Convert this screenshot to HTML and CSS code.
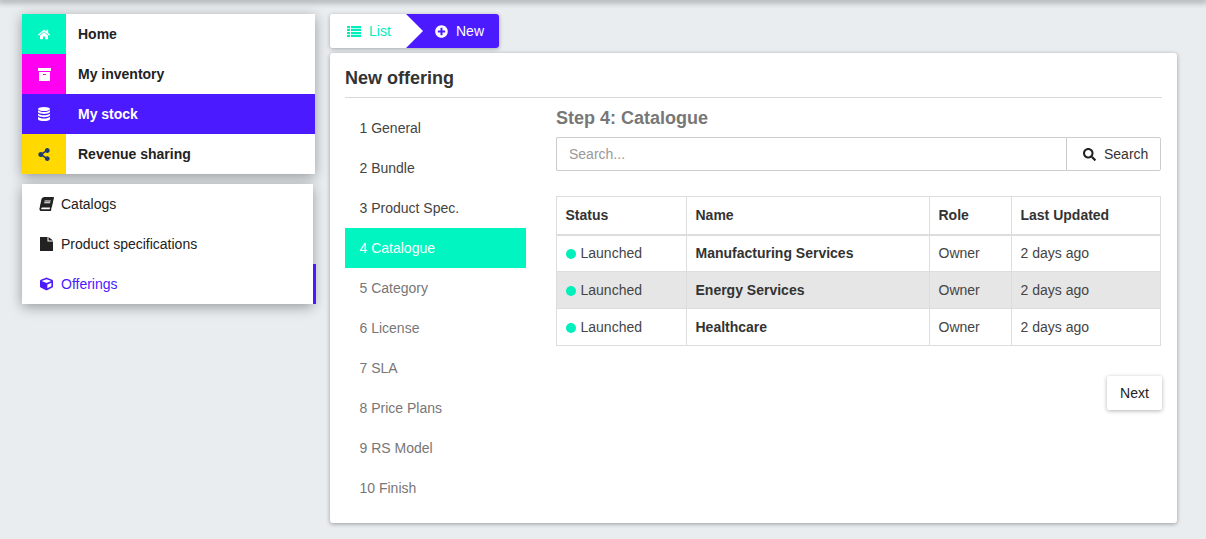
FILE: index.html
```html
<!DOCTYPE html>
<html lang="en">
<head>
  <meta charset="UTF-8" />
  <meta name="viewport" content="width=device-width, initial-scale=1.0"/>
  <title>New offering</title>
  <link rel="stylesheet" href="styles.css">
</head>
<body>
  <div class="topedge"></div>
  <div class="page">
    <aside class="sidebar">
      <nav class="mainmenu">
        <a class="mainitem">
          <span class="tile tile-home"><svg class="ico ico-home" viewBox="0 0 576 512"><path d="M280.37 148.26L96 300.11V464a16 16 0 0 0 16 16l112.06-.29a16 16 0 0 0 15.92-16V368a16 16 0 0 1 16-16h64a16 16 0 0 1 16 16v95.64a16 16 0 0 0 16 16.05L464 480a16 16 0 0 0 16-16V300L295.67 148.26a12.19 12.19 0 0 0-15.3 0zM571.6 251.47L488 182.56V44.05a12 12 0 0 0-12-12h-56a12 12 0 0 0-12 12v72.61L318.47 43a48 48 0 0 0-61 0L4.34 251.47a12 12 0 0 0-1.6 16.9l25.5 31A12 12 0 0 0 45.15 301l235.22-193.74a12.19 12.19 0 0 1 15.3 0L530.9 301a12 12 0 0 0 16.9-1.6l25.5-31a12 12 0 0 0-1.7-16.93z"/></svg></span>
          Home
        </a>
        <a class="mainitem">
          <span class="tile tile-inventory"><svg class="ico ico-box" viewBox="0 0 13 13"><path d="M0 0h13v3H0zM1 4h11v9H1zM5 6v1h3V6z" fill-rule="evenodd"/></svg></span>
          My inventory
        </a>
        <a class="mainitem mainitem-active">
          <span class="tile"><svg class="ico ico-db" viewBox="0 0 12 14"><ellipse cx="6" cy="2" rx="6" ry="2"/><path d="M0 3.2v1.6C0 6 2.7 6.9 6 6.9s6-.9 6-2.1V3.2C11 4.3 8.6 5 6 5S1 4.3 0 3.2z"/><path d="M0 6.5v1.6c0 1.2 2.7 2.1 6 2.1s6-.9 6-2.1V6.5c-1 1.1-3.4 1.8-6 1.8s-5-.7-6-1.8z"/><path d="M0 9.8v2.1C0 13.1 2.7 14 6 14s6-.9 6-2.1V9.8c-1 1.1-3.4 1.8-6 1.8s-5-.7-6-1.8z"/></svg></span>
          My stock
        </a>
        <a class="mainitem">
          <span class="tile tile-revenue"><svg class="ico ico-share" viewBox="0 0 448 512"><path d="M352 320c-22.608 0-43.387 7.819-59.79 20.895l-102.486-64.054a96.551 96.551 0 0 0 0-41.683l102.486-64.054C308.613 184.181 329.392 192 352 192c53.019 0 96-42.981 96-96S405.019 0 352 0s-96 42.981-96 96c0 7.158.79 14.13 2.276 20.841L155.79 180.895C139.387 167.819 118.608 160 96 160c-53.019 0-96 42.981-96 96s42.981 96 96 96c22.608 0 43.387-7.819 59.79-20.895l102.486 64.054A96.301 96.301 0 0 0 256 416c0 53.019 42.981 96 96 96s96-42.981 96-96-42.981-96-96-96z"/></svg></span>
          Revenue sharing
        </a>
      </nav>
      <nav class="submenu">
        <a class="subitem">
          <svg class="subico subico-book" viewBox="0 0 448 512"><path d="M448 360V24c0-13.3-10.7-24-24-24H96C43 0 0 43 0 96v320c0 53 43 96 96 96h328c13.3 0 24-10.7 24-24v-16c0-7.5-3.5-14.3-8.9-18.7-4.2-15.4-4.2-59.3 0-74.7 5.4-4.3 8.9-11.1 8.9-18.6zM128 134c0-3.3 2.7-6 6-6h212c3.3 0 6 2.7 6 6v20c0 3.3-2.7 6-6 6H134c-3.3 0-6-2.7-6-6v-20zm0 64c0-3.3 2.7-6 6-6h212c3.3 0 6 2.7 6 6v20c0 3.3-2.7 6-6 6H134c-3.3 0-6-2.7-6-6v-20zm253.4 250H96c-17.7 0-32-14.3-32-32 0-17.6 14.4-32 32-32h285.4c-1.9 17.1-1.9 46.9 0 64z"/></svg>
          Catalogs
        </a>
        <a class="subitem">
          <svg class="subico" viewBox="0 0 13 14"><path d="M0 0h7.5v4.5H13V14H0zM8.500 0L13 3.500H8.500z"/></svg>
          Product specifications
        </a>
        <a class="subitem subitem-active">
          <svg class="subico" viewBox="0 0 512 512"><path d="M239.1 6.3l-208 78c-18.7 7-31.1 25-31.1 45v225.1c0 18.2 10.3 34.8 26.5 42.9l208 104c13.5 6.8 29.4 6.8 42.9 0l208-104c16.3-8.1 26.5-24.8 26.5-42.9V129.3c0-20-12.4-37.9-31.1-44.9l-208-78C262 2.2 250 2.2 239.1 6.3zM256 68.4l192 72v1.1l-192 78-192-78v-1.1l192-72zm32 356V275.5l160-65v133.9l-160 80z"/></svg>
          Offerings
        </a>
      </nav>
    </aside>

    <main class="content">
      <div class="tabs">
        <a class="tab tab-list">
          <svg class="tabico tabico-list" viewBox="0 0 14 11"><path d="M0 0h3v2.2H0zM4 0h10v2.2H4zM0 2.9h3v2.2H0zM4 2.9h10v2.2H4zM0 5.9h3v2.2H0zM4 5.9h10v2.2H4zM0 8.8h3V11H0zM4 8.8h10V11H4z"/></svg>
          List
        </a>
        <a class="tab tab-new">
          <svg class="tabico" viewBox="0 0 512 512"><path d="M256 8C119 8 8 119 8 256s111 248 248 248 248-111 248-248S393 8 256 8zm144 276c0 6.6-5.4 12-12 12h-92v92c0 6.6-5.4 12-12 12h-56c-6.6 0-12-5.4-12-12v-92h-92c-6.6 0-12-5.4-12-12v-56c0-6.6 5.4-12 12-12h92v-92c0-6.6 5.4-12 12-12h56c6.6 0 12 5.4 12 12v92h92c6.6 0 12 5.4 12 12v56z"/></svg>
          New
        </a>
      </div>

      <section class="card">
        <h2 class="card-title">New offering</h2>
        <div class="wizard">
          <ol class="steps">
            <li class="step step-done">1 General</li>
            <li class="step step-done">2 Bundle</li>
            <li class="step step-done">3 Product Spec.</li>
            <li class="step step-current">4 Catalogue</li>
            <li class="step">5 Category</li>
            <li class="step">6 License</li>
            <li class="step">7 SLA</li>
            <li class="step">8 Price Plans</li>
            <li class="step">9 RS Model</li>
            <li class="step">10 Finish</li>
          </ol>
          <div class="panel">
            <h3 class="panel-title">Step 4: Catalogue</h3>
            <div class="searchbox">
              <input class="searchinput" type="text" placeholder="Search...">
              <button class="searchbtn">
                <svg class="searchico" viewBox="0 0 512 512"><path d="M505 442.7L405.3 343c-4.5-4.5-10.6-7-17-7H372c27.6-35.3 44-79.7 44-128C416 93.1 322.9 0 208 0S0 93.1 0 208s93.1 208 208 208c48.3 0 92.7-16.4 128-44v16.3c0 6.4 2.5 12.5 7 17l99.7 99.7c9.4 9.4 24.6 9.4 33.9 0l28.3-28.3c9.4-9.4 9.4-24.6.1-34zM208 336c-70.7 0-128-57.2-128-128 0-70.7 57.2-128 128-128 70.7 0 128 57.2 128 128 0 70.7-57.2 128-128 128z"/></svg>
                Search
              </button>
            </div>
            <table class="offers">
              <thead>
                <tr><th class="col-status">Status</th><th class="col-name">Name</th><th class="col-role">Role</th><th>Last Updated</th></tr>
              </thead>
              <tbody>
                <tr><td><span class="dot"></span>Launched</td><td class="name">Manufacturing Services</td><td>Owner</td><td>2 days ago</td></tr>
                <tr class="row-hover"><td><span class="dot"></span>Launched</td><td class="name">Energy Services</td><td>Owner</td><td>2 days ago</td></tr>
                <tr><td><span class="dot"></span>Launched</td><td class="name">Healthcare</td><td>Owner</td><td>2 days ago</td></tr>
              </tbody>
            </table>
            <div class="actions">
              <button class="nextbtn">Next</button>
            </div>
          </div>
        </div>
      </section>
    </main>
  </div>
</body>
</html>
```

FILE: styles.css
```css
* { box-sizing: border-box; }
html, body { height: 100%; }
body { margin: 0; background: #e9edf0; color: #222; font-family: "Liberation Sans", Arial, sans-serif; font-size: 14px; overflow: hidden; }
.topedge { height: 0; box-shadow: 0 0 6px 2px rgba(0,0,0,0.4); }
.page { display: flex; align-items: flex-start; padding: 14px 29px 0 22px; }

.sidebar { width: 294px; margin-right: 14px; flex: none; }
.mainmenu { width: 293px; background: white; box-shadow: 0 3px 12px rgba(0,0,0,0.35); }
.mainitem { display: flex; align-items: center; height: 40px; font-weight: bold; color: #222; }
.mainitem-active { background: #4c1aff; color: white; }
.tile { display: flex; align-items: center; justify-content: center; width: 44px; height: 40px; margin-right: 12px; }
.tile-home { background: #00f5c0; }
.tile-inventory { background: #ff00f0; }
.tile-revenue { background: #ffd900; }
.ico { fill: white; }
.ico-home { width: 12px; height: 11px; }
.ico-box { width: 13px; height: 13px; }
.ico-db { width: 12px; height: 14px; }
.ico-share { width: 12px; height: 13px; fill: #1c3a6e; }

.submenu { width: 291px; margin-top: 10px; background: white; box-shadow: 0 3px 12px rgba(0,0,0,0.35); }
.subitem { position: relative; display: flex; align-items: center; height: 40px; padding-left: 18px; color: #222; }
.subico { width: 13px; height: 14px; margin-right: 8px; fill: #222; }
.subico-book { transform: skewX(-12deg); }
.subitem-active { color: #4c1aff; }
.subitem-active .subico { fill: #4c1aff; }
.subitem-active::after { content: ""; position: absolute; top: 0; right: -3px; width: 3px; height: 40px; background: #4c1aff; }

.content { flex: 1; min-width: 0; }
.tabs { display: flex; width: 169px; height: 34px; border-radius: 3px; overflow: hidden; box-shadow: 0 1px 4px rgba(0,0,0,0.3); }
.tab { display: flex; align-items: center; height: 34px; }
.tab-list { position: relative; width: 76px; padding-left: 17px; background: white; color: #00f0bc; }
.tab-list::after { content: ""; position: absolute; top: 0; left: 76px; border-left: 17px solid white; border-top: 17px solid transparent; border-bottom: 17px solid transparent; }
.tab-new { flex: 1; padding-left: 29px; background: #4c1aff; color: white; }
.tabico { width: 13px; height: 13px; margin-right: 8px; fill: currentColor; }
.tabico-list { width: 14px; height: 11px; }

.card { height: 470px; margin-top: 5px; padding: 15px 15px 0; background: white; border-radius: 3px; box-shadow: 0 1px 4px rgba(0,0,0,0.35); }
.card-title { margin: 0; height: 30px; border-bottom: 1px solid #d9d9d9; font-size: 18px; line-height: 20px; color: #333; }
.wizard { display: flex; margin-top: 10px; }
.steps { width: 181px; margin: 0 30px 0 0; padding: 0; list-style: none; flex: none; }
.step { height: 40px; padding-left: 14.5px; line-height: 40px; color: #777; }
.step-done { color: #444; }
.step-current { background: #00f5c0; color: white; }

.panel { flex: 1; min-width: 0; }
.panel-title { margin: 0 0 8px; height: 21px; font-size: 18px; line-height: 20px; color: #777; }
.searchbox { display: flex; width: 605px; height: 34px; }
.searchinput { flex: 1; min-width: 0; height: 34px; padding: 0 12px; border: 1px solid #ccc; border-right: none; border-radius: 2px 0 0 2px; font: inherit; color: #222; outline: none; }
.searchinput::placeholder { color: #999; }
.searchbtn { display: flex; align-items: center; width: 95px; height: 34px; padding: 0 0 0 16px; background: white; border: 1px solid #ccc; border-radius: 0 2px 2px 0; font: inherit; color: #333; }
.searchico { width: 13px; height: 13px; margin-right: 8px; fill: #222; }

.offers { width: 605px; margin-top: 25px; border-collapse: collapse; table-layout: fixed; }
.offers th, .offers td { padding: 0 8px 0 8.5px; border: 1px solid #ddd; text-align: left; }
.offers th { height: 38px; border-bottom-width: 2px; color: #333; }
.offers td { height: 37px; color: #444; }
.col-status { width: 130px; }
.col-name { width: 243px; }
.col-role { width: 82px; }
.offers .name { font-weight: bold; color: #333; }
.row-hover { background: #e6e6e6; }
.dot { display: inline-block; width: 10px; height: 10px; margin-right: 5px; border-radius: 50%; background: #00f0bc; vertical-align: -1px; }

.actions { display: flex; justify-content: flex-end; margin-top: 30px; }
.nextbtn { width: 55px; height: 34px; padding: 0; background: white; border: none; border-radius: 2px; box-shadow: 0 1px 4px rgba(0,0,0,0.3); font: inherit; color: #222; }
```
